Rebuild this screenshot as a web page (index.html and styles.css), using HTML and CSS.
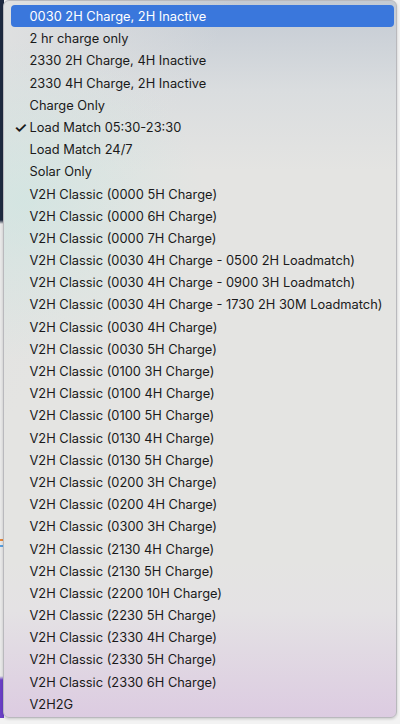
FILE: index.html
```html
<!DOCTYPE html>
<html>
<head>
<meta charset="utf-8">
<link rel="stylesheet" href="styles.css">
</head>
<body>
<div class="page">
  <div class="menu">
    <div class="item selected">0030 2H Charge, 2H Inactive</div>
    <div class="item">2 hr charge only</div>
    <div class="item">2330 2H Charge, 4H Inactive</div>
    <div class="item">2330 4H Charge, 2H Inactive</div>
    <div class="item">Charge Only</div>
    <div class="item checked"><span class="check">✓</span>Load Match 05:30-23:30</div>
    <div class="item">Load Match 24/7</div>
    <div class="item">Solar Only</div>
    <div class="item">V2H Classic (0000 5H Charge)</div>
    <div class="item">V2H Classic (0000 6H Charge)</div>
    <div class="item">V2H Classic (0000 7H Charge)</div>
    <div class="item">V2H Classic (0030 4H Charge - 0500 2H Loadmatch)</div>
    <div class="item">V2H Classic (0030 4H Charge - 0900 3H Loadmatch)</div>
    <div class="item">V2H Classic (0030 4H Charge - 1730 2H 30M Loadmatch)</div>
    <div class="item">V2H Classic (0030 4H Charge)</div>
    <div class="item">V2H Classic (0030 5H Charge)</div>
    <div class="item">V2H Classic (0100 3H Charge)</div>
    <div class="item">V2H Classic (0100 4H Charge)</div>
    <div class="item">V2H Classic (0100 5H Charge)</div>
    <div class="item">V2H Classic (0130 4H Charge)</div>
    <div class="item">V2H Classic (0130 5H Charge)</div>
    <div class="item">V2H Classic (0200 3H Charge)</div>
    <div class="item">V2H Classic (0200 4H Charge)</div>
    <div class="item">V2H Classic (0300 3H Charge)</div>
    <div class="item">V2H Classic (2130 4H Charge)</div>
    <div class="item">V2H Classic (2130 5H Charge)</div>
    <div class="item">V2H Classic (2200 10H Charge)</div>
    <div class="item">V2H Classic (2230 5H Charge)</div>
    <div class="item">V2H Classic (2330 4H Charge)</div>
    <div class="item">V2H Classic (2330 5H Charge)</div>
    <div class="item">V2H Classic (2330 6H Charge)</div>
    <div class="item">V2H2G</div>
  </div>
</div>
</body>
</html>
```
FILE: styles.css
```css
html, body {
  margin: 0;
  padding: 0;
  width: 400px;
  height: 724px;
  overflow: hidden;
}
body {
  background: #f2f2f2;
}
.page {
  width: 400px;
  height: 724px;
  background:
    linear-gradient(to bottom, transparent 539px, #e8873a 539px, #e8873a 541px, transparent 541px, transparent 545px, #5aa0e0 545px, #5aa0e0 547px, transparent 547px) left top / 4px 724px no-repeat,
    linear-gradient(to bottom, #1e2a40 0px, #1e2a40 220px, #e9e9e9 224px, #e9e9e9 676px, #6a3fc6 680px, #6a3fc6 718px, #f3f3f3 718px) left top / 4px 724px no-repeat,
    #f3f3f3;
  font-family: Inter, "Noto Sans", sans-serif;
}
.menu {
  margin-left: 3px;
  width: 394px;
  height: 718px;
  box-sizing: border-box;
  padding-top: 4px;
  border-radius: 6px;
  border: 0.5px solid #b9b9bd;
  box-shadow: 0 1px 3px rgba(0,0,0,0.18);
  background:
    radial-gradient(ellipse 180px 160px at 20px 200px, rgba(200,230,225,0.55), rgba(200,230,225,0)),
    linear-gradient(to bottom, rgba(228,228,226,0) 560px, #e4e2e4 610px, #dccbe1 718px),
    linear-gradient(to bottom right, #e0e1e1 0%, rgba(224,225,225,0) 30%),
    linear-gradient(to bottom, #c3cad3 0px, #dadddf 90px, #e4e4e2 170px, #e4e4e2 560px);
  overflow: hidden;
}
.item {
  position: relative;
  height: 22.2px;
  line-height: 24px;
  padding-left: 25.5px;
  font-size: 12.85px;
  color: #1a1a1a;
  white-space: nowrap;
}
.item.selected {
  margin-left: 7px;
  margin-right: 2px;
  padding-left: 18.5px;
  background: #3a77dc;
  color: #ffffff;
  border-radius: 4px;
}
.check {
  position: absolute;
  left: 10px;
  top: 0;
  font-size: 15px;
  font-weight: 600;
}
```
